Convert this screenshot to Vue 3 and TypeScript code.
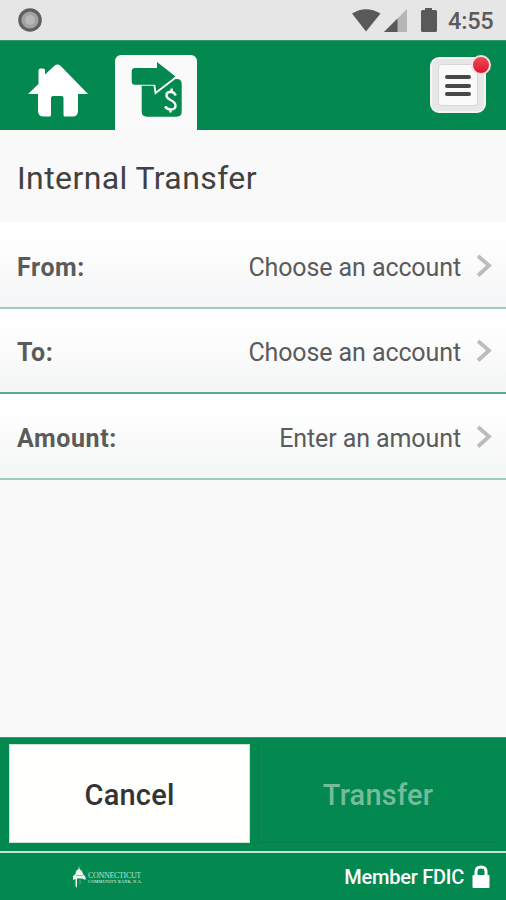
<script setup lang="ts">
interface Field {
  label: string
  value: string
}

const fields: Field[] = [
  { label: 'From:', value: 'Choose an account' },
  { label: 'To:', value: 'Choose an account' },
  { label: 'Amount:', value: 'Enter an amount' },
]
</script>

<template>
  <div class="screen">
    <div class="status">
      <svg class="record" width="24" height="24" viewBox="0 0 24 24">
        <circle cx="12" cy="12" r="10.2" fill="#a2a2a2" stroke="#606060" stroke-width="3.2" />
        <circle cx="12" cy="12" r="5" fill="#b8b8b8" />
      </svg>
      <svg class="indicators" width="88" height="26" viewBox="0 0 88 26">
        <path d="M0 5.500Q14 -3 28.500 5.500L14 23.500Z" fill="#595959" />
        <path d="M55 1V24H32Z" fill="#b5b5b5" />
        <path d="M45.500 10.500V24H32Z" fill="#595959" />
        <path d="M73 0H80V2H83.500Q85 2 85 3.500V22.500Q85 24 83.500 24H70.500Q69 24 69 22.500V3.500Q69 2 70.500 2H73Z" fill="#595959" />
      </svg>
      <span class="clock">4:55</span>
    </div>

    <nav class="tabs">
      <button class="home" aria-label="Home">
        <svg width="62" height="54" viewBox="0 0 62 54">
          <path d="M1 30L11.500 20V6.500Q11.500 4.500 13.500 4.500H16Q18 4.500 18 6.500V10.500L27.500 1.800Q30.500 -1 33.500 1.800L61 30H51V47Q51 52.500 45.500 52.500H38Q36.500 52.500 36.500 51V34Q36.500 32 34.500 32H26Q24 32 24 34V51Q24 52.500 22.500 52.500H17Q11 52.500 11 47V30Z" fill="#fff" />
        </svg>
      </button>
      <button class="transfer-tab" aria-label="Transfer">
        <svg width="52" height="56" viewBox="0 0 52 56">
          <path d="M10.700 22V49.500Q10.700 54.700 16 54.700H45.500Q50.700 54.700 50.700 49.500V22Q50.700 17 46 17H38L24 22Z" fill="#03884f" />
          <path d="M4 6H26V0L44.500 14.500L24.500 31L23.300 22.700H4Q.7 22.700 .7 19.500V9.500Q.7 6 4 6Z" fill="#03884f" />
          <path d="M10 23.300H23.300" fill="none" stroke="#d9ece2" stroke-width="1.100" />
          <path d="M23.300 22.800L24.500 31L45.500 15" fill="none" stroke="#fafafa" stroke-width="1.800" />
          <path d="M44.800 33.500Q43 29.800 39.500 29.800Q35.500 30 35.500 33.300Q35.500 36 39.500 38Q44.500 40.300 44.500 43.700Q44.500 47.300 40 47.500Q36 47.500 34 44.500M40.700 26.500V30M39.500 47V50.500" fill="none" stroke="#f7faf7" stroke-width="2.400" />
        </svg>
      </button>
      <button class="menu" aria-label="Menu">
        <span class="bars"><i /><i /><i /></span>
        <b class="alert" />
      </button>
    </nav>

    <h1>Internal Transfer</h1>

    <main>
      <div v-for="field in fields" :key="field.label" class="row">
        <strong>{{ field.label }}</strong>
        <span class="value">{{ field.value }}</span>
        <svg width="18" height="24" viewBox="0 0 18 24">
          <path d="M3 2L14 11.500L3 21.500" fill="none" stroke="#bcbcbc" stroke-width="3.800" />
        </svg>
      </div>
    </main>

    <section class="actions">
      <button class="cancel">Cancel</button>
      <button class="submit" disabled>Transfer</button>
    </section>

    <footer>
      <div class="bank">
        <svg width="15" height="23" viewBox="0 0 15 23">
          <path d="M7 0L7.600 3L10 5L11 8L13.500 11V14L10 12.500H5V22L3.500 20V13L1 14V10L3.500 8L4 5L6.500 3Z" fill="#e7f5ee" />
          <path d="M4 9.500H11M8 14V18" stroke="#73bd9b" stroke-width=".8" />
        </svg>
        <div class="bank-name">
          <span>CONNECTICUT</span>
          <small>COMMUNITY BANK, N.A.</small>
        </div>
      </div>
      <div class="member">
        <span>Member FDIC</span>
        <svg width="18" height="24" viewBox="0 0 18 24">
          <path d="M4 11V6.500Q4 2 9 2T14 6.500V11" fill="none" stroke="#fff" stroke-width="3" />
          <rect x="0.500" y="10" width="17" height="13" rx="1" fill="#fff" />
        </svg>
      </div>
    </footer>
  </div>
</template>

<style>
body {
  margin: 0;
  overflow: hidden;
}
</style>

<style scoped>
* {
  box-sizing: border-box;
}

.screen {
  width: 506px;
  height: 900px;
  display: flex;
  flex-direction: column;
  background: #f9f9f9;
  font-family: Roboto, "Liberation Sans", sans-serif;
  color: #5b5b5b;
}

button {
  appearance: none;
  border: 0;
  padding: 0;
  margin: 0;
  background: none;
  font: inherit;
}

svg {
  display: block;
  flex: none;
}

.status {
  height: 40px;
  flex: none;
  display: flex;
  padding: 8px 12px 0 18px;
  background: #e6e6e6;
}

.indicators {
  margin-left: auto;
}

.clock {
  width: 46px;
  margin-left: 8px;
  font-size: 23.5px;
  line-height: 27px;
  font-weight: 500;
  letter-spacing: -.2px;
  white-space: nowrap;
}

.tabs {
  height: 90px;
  flex: none;
  display: flex;
  padding: 14px 20px 0 27px;
  background: #03884f;
  border-top: 1px solid #35966b;
}

.home {
  width: 62px;
  height: 54px;
  margin-top: 9px;
}

.transfer-tab {
  width: 82px;
  height: 75px;
  margin-left: 26px;
  padding: 7px 0 0 16px;
  display: flex;
  background: #fafafa;
  border-radius: 6px 6px 0 0;
}

.menu {
  position: relative;
  width: 56px;
  height: 56px;
  margin: 2px 0 0 auto;
  padding: 5px 6px;
  border-radius: 9px;
  background: #e8e7e7;
  border: 2px solid #f5f3f3;
}

.bars {
  width: 40px;
  height: 42px;
  display: flex;
  flex-direction: column;
  gap: 4.5px;
  padding: 10px 6px;
  border-radius: 4px;
  background: #fafafa;
  border: 1px solid #d9d6d7;
}

.bars i {
  height: 4px;
  flex: none;
  border-radius: 2px;
  background: #484848;
}

.alert {
  position: absolute;
  top: -4px;
  right: -7px;
  width: 20px;
  height: 20px;
  border-radius: 50%;
  border: 2px solid #f5dfdf;
  background: linear-gradient(#ee4a58, #dc1730);
}

h1 {
  height: 92px;
  flex: none;
  margin: 0;
  padding: 0 17px;
  line-height: 96px;
  font-size: 32px;
  font-weight: 400;
  letter-spacing: .4px;
  color: #414141;
}

main {
  flex: 1;
}

.row {
  height: 86px;
  display: flex;
  align-items: center;
  padding: 5px 13px 0 17px;
  background: linear-gradient(#fff 15%, #f4f5f6);
  border-bottom: 2px solid #9ecdbb;
  font-size: 25px;
}

.row:nth-child(1) {
  height: 87px;
}

.row:nth-child(2) {
  height: 85px;
  padding-top: 4px;
  border-bottom-color: #5baa8b;
}

strong {
  font-weight: 700;
  letter-spacing: .6px;
}

.value {
  margin-left: auto;
  margin-right: 14px;
  letter-spacing: -.1px;
}

.row svg {
  margin-top: -3px;
}

.actions {
  height: 114px;
  flex: none;
  display: grid;
  grid-template-columns: 241px 241px;
  gap: 8px;
  padding: 6px 9px 8px;
  background: #03884f;
  border-top: 1px solid #389a70;
}

.actions button {
  font-size: 29px;
  font-weight: 500;
  letter-spacing: .2px;
  padding-top: 3px;
}

.actions .cancel {
  background: #fffffe;
  color: #343434;
  border: 1px solid #d1e3d9;
}

.actions .submit {
  padding-right: 2px;
  color: #74bc9c;
  border-left: 1px solid #087d4a;
  border-bottom: 1px solid #087d4a;
}

footer {
  height: 49px;
  flex: none;
  display: flex;
  justify-content: space-between;
  align-items: center;
  padding: 1px 16px 0 72px;
  background: #03884f;
  border-top: 2px solid #b8e7d0;
  color: #fff;
}

.bank {
  display: flex;
  align-items: center;
  gap: 1px;
}

.bank-name {
  display: flex;
  flex-direction: column;
  padding-top: 2px;
  font-family: "Liberation Serif", serif;
  white-space: nowrap;
  color: #bce0cf;
}

.bank-name span {
  font-size: 8px;
  line-height: 7px;
  letter-spacing: -.32px;
}

.bank-name small {
  font-size: 4px;
  line-height: 5px;
  font-weight: 700;
  letter-spacing: .28px;
}

.member {
  display: flex;
  align-items: center;
  gap: 8px;
  font-size: 20px;
  font-weight: 500;
  letter-spacing: -.25px;
}
</style>
